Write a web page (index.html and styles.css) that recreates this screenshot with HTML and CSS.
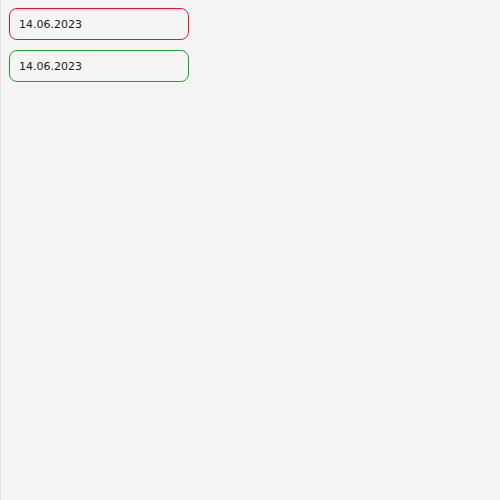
FILE: index.html
```html
<!DOCTYPE html>
<html>
<head>
<meta charset="utf-8">
<link rel="stylesheet" href="styles.css">
</head>
<body>
<div class="page">
  <div class="field field-invalid">14.06.2023</div>
  <div class="field field-valid">14.06.2023</div>
</div>
</body>
</html>
```
FILE: styles.css
```css
html, body {
  margin: 0;
  padding: 0;
  height: 100%;
}
body {
  background: #f5f5f5;
  border-left: 1px solid #e3e3e3;
  box-sizing: border-box;
  font-family: "DejaVu Sans", sans-serif;
}
.page {
  padding: 8px;
  display: flex;
  flex-direction: column;
  gap: 10px;
}
.field {
  width: 180px;
  height: 32px;
  box-sizing: border-box;
  border-radius: 8px;
  padding: 0 9px;
  display: flex;
  align-items: center;
  font-size: 11px;
  color: #1a1a1a;
  background: #f5f5f5;
}
.field-invalid {
  border: 1px solid #e8192c;
}
.field-valid {
  border: 1px solid #1da32a;
}
```
